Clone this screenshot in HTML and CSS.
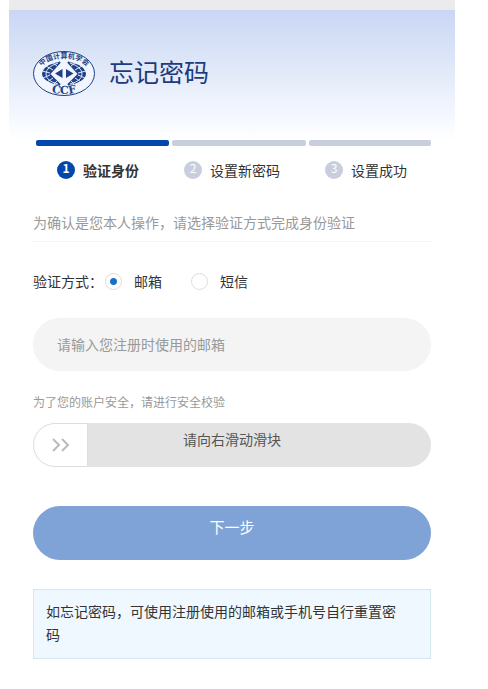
FILE: index.html
```html
<!doctype html>
<html lang="zh-CN">
	<head>
	<meta charset="UTF-8">
	<meta name="viewport" content="width=device-width, initial-scale=1">
	<title>忘记密码</title>
	<link rel="stylesheet" href="styles.css">
	</head>

	<body>
		<div class="page">
			<header class="top">
				<svg class="logo" viewBox="0 0 62 45" role="img" aria-label="CCF">
					<defs>
						<path id="arc-top" d="M6 20 A25.500 16 0 0 1 56 20"/>
						<path id="arc-bottom" d="M13 39.500 Q31 46.500 49 39.500"/>
					</defs>
					<ellipse class="ring" cx="31" cy="22.500" rx="30.500" ry="22"/>
					<!-- globe grid on both sides of the diamond -->
					<g class="globe">
						<path d="M26 11 Q10 14 9 23 Q10 31 26 34 L15 23z"/>
						<path d="M36 11 Q52 14 53 23 Q52 31 36 34 L47 23z"/>
					</g>
					<g class="grid">
						<path d="M27 11 L16 23 L27 34"/>
						<path d="M35 11 L46 23 L35 34"/>
					</g>
					<g class="cuts">
						<path d="M9 20 L17 22 M10 27 L17 24 M13 15 L20 19 M14 31 L20 27 M19 11 L24 15 M20 34 L24 30 M25 12 Q13 16 13 23 Q13 30 25 33"/>
						<path d="M53 20 L45 22 M52 27 L45 24 M49 15 L42 19 M48 31 L42 27 M43 11 L38 15 M42 34 L38 30 M37 12 Q49 16 49 23 Q49 30 37 33"/>
					</g>
					<path class="mark" d="M29.500 18 V27 L22 22.500z M33 18 V27 L40.500 22.500z"/>
					<text class="logo-cn"><textPath href="#arc-top" startOffset="50%">中国计算机学会</textPath></text>
					<text class="logo-en"><textPath href="#arc-bottom" startOffset="50%">CCF</textPath></text>
				</svg>
				<h1>忘记密码</h1>
			</header>

			<form class="content">
				<div class="bars">
					<span class="bar on"></span><span class="bar"></span><span class="bar"></span>
				</div>
				<ol class="steps">
					<li class="on"><span class="num">1</span>验证身份</li>
					<li><span class="num">2</span>设置新密码</li>
					<li><span class="num">3</span>设置成功</li>
				</ol>

				<p class="hint">为确认是您本人操作，请选择验证方式完成身份验证</p>

				<div class="ways" role="radiogroup" aria-labelledby="way-title">
					<span id="way-title">验证方式：</span>
					<input type="radio" name="way" id="way-mail" checked>
					<label for="way-mail">邮箱</label>
					<input type="radio" name="way" id="way-sms">
					<label for="way-sms">短信</label>
				</div>

				<input class="mail" type="email" aria-label="邮箱" placeholder="请输入您注册时使用的邮箱">

				<p class="safe">为了您的账户安全，请进行安全校验</p>
				<div class="slider">
					<input type="range" id="check" min="0" max="100" value="0">
					<label for="check">请向右滑动滑块</label>
					<svg class="arrows" viewBox="0 0 20 16" aria-hidden="true"><path d="M2 2 L8 8 L2 14 M11 2 L17 8 L11 14"/></svg>
				</div>

				<button class="next" type="button">下一步</button>

				<p class="notice">如忘记密码，可使用注册使用的邮箱或手机号自行重置密码</p>
			</form>
		</div>
	</body>
</html>
```
FILE: styles.css
```css
* {box-sizing:border-box;}
body {margin:0; background-color:#fff; color:#333; font-family:"Noto Sans CJK SC", sans-serif; font-size:14px; line-height:20px;}
h1, p, ol {margin:0; padding:0; font-weight:normal;}
input, button {font-family:inherit; font-size:14px;}

.page {margin:0 33px 0 9px; border-top:10px solid #ebebeb;}

.top {display:flex; align-items:flex-start; gap:14px; padding:41px 24px 44px; background:linear-gradient(#c9d6f5, #e3ebf9 50%, #f3f6ff 78%, #fff);}
.top h1 {font-size:25px; line-height:40px; color:#1c3a7c;}

.logo {width:62px; height:45px; flex:none;}
.ring {fill:#f1f5fd; stroke:#1f3f86; stroke-width:1;}
.globe {fill:#1f3f86;}
.grid {fill:none; stroke:#1f3f86; stroke-width:2;}
.cuts {fill:none; stroke:#dfe7f7; stroke-width:1;}
.mark {fill:#1f3f86;}
.logo-cn {font-size:7px; font-weight:bold; fill:#1f3f86; text-anchor:middle;}
.logo-en {font-family:"DejaVu Serif", serif; font-size:11px; font-weight:bold; fill:#1f3f86; text-anchor:middle;}

.content {padding:0 24px 30px;}

.bars {display:grid; grid-template-columns:12fr 12fr 11fr; gap:3px; padding-left:3px;}
.bar {height:6px; border-radius:2px; background-color:#c8cedd;}
.bar.on {background-color:#0347ad;}

.steps {display:flex; justify-content:space-between; margin-top:14px; padding:0 24px; list-style:none;}
.steps li {display:flex; align-items:center; gap:8px;}
.steps .on {font-weight:bold;}
.num {width:18px; height:18px; border-radius:50%; background-color:#c8cedd; color:#fff; font-size:12px; line-height:14px; text-align:center;}
.on .num {background-color:#0347ad;}

.hint {margin-top:32px; padding-bottom:9px; border-bottom:1px solid #f3f3f3; color:#999;}

.ways {display:flex; align-items:center; margin-top:29px;}
.ways input {appearance:none; width:17px; height:17px; margin:0 12px 0 2px; border:1px solid #ddd; border-radius:50%; background-color:#fff;}
.ways input:checked {background-image:radial-gradient(circle, #1670c8 3px, transparent 4px);}
.ways label {margin-right:27px;}

.mail {display:block; width:100%; height:53px; margin-top:27px; padding:0 24px 2px; border:0; border-radius:27px; background-color:#f4f4f4; color:#333;}
.mail::placeholder {color:#999; opacity:1;}

.safe {margin-top:21px; color:#999; font-size:12px;}

.slider {display:grid; height:44px; margin-top:11px; border-radius:22px; background-color:#e3e3e3; overflow:hidden;}
.slider > * {grid-area:1 / 1;}
.slider input {appearance:none; width:100%; height:44px; margin:0; background:none;}
.slider input::-webkit-slider-thumb {appearance:none; width:55px; height:44px; border:1px solid #ddd; border-radius:22px 0 0 22px; background-color:#fff;}
.slider input::-moz-range-thumb {width:55px; height:44px; border:1px solid #ddd; border-radius:22px 0 0 22px; background-color:#fff;}
.slider label {line-height:32px; text-align:center; color:#555; pointer-events:none;}
.arrows {width:20px; height:16px; margin-left:18px; align-self:center; fill:none; stroke:#bbb; stroke-width:2; pointer-events:none;}

.next {display:block; width:100%; height:54px; margin-top:39px; padding:0 0 14px; border:0; border-radius:27px; background-color:#7fa2d7; color:#fff; font-size:15px;}

.notice {margin-top:29px; padding:10px 24px 12px 12px; border:1px solid #d5e8f0; background-color:#eff8ff; line-height:23px;}
```
